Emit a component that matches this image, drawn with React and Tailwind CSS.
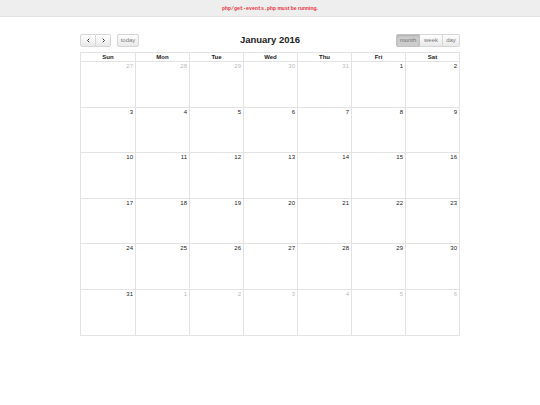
import React from "react";

const weeks = [
  [[27, 1], [28, 1], [29, 1], [30, 1], [31, 1], [1, 0], [2, 0]],
  [[3, 0], [4, 0], [5, 0], [6, 0], [7, 0], [8, 0], [9, 0]],
  [[10, 0], [11, 0], [12, 0], [13, 0], [14, 0], [15, 0], [16, 0]],
  [[17, 0], [18, 0], [19, 0], [20, 0], [21, 0], [22, 0], [23, 0]],
  [[24, 0], [25, 0], [26, 0], [27, 0], [28, 0], [29, 0], [30, 0]],
  [[31, 0], [1, 1], [2, 1], [3, 1], [4, 1], [5, 1], [6, 1]],
];
const days = ["Sun", "Mon", "Tue", "Wed", "Thu", "Fri", "Sat"];

function Btn({ children, className = "", active = false }) {
  return (
    <div
      className={
        "h-[13px] flex items-center justify-center border text-[6px] " +
        (active
          ? "bg-[#cdcdcd] border-[#c2c2c2] text-[#707070] shadow-[inset_0_1px_2px_rgba(0,0,0,0.15)] "
          : "border-[#d6d6d6] bg-gradient-to-b from-[#ffffff] to-[#e8e8e8] ") +
        className
      }
    >
      {children}
    </div>
  );
}

export default function App() {
  return (
    <div
      className="w-[540px] h-[405px] bg-white"
      style={{ fontFamily: '"Liberation Sans", Arial, sans-serif' }}
    >
      <div className="h-[17px] bg-[#eeeeee] border-b border-[#e2e2e2] flex items-center justify-center pt-[1px]">
        <p className="text-[5px] leading-[6px] text-[#e8333f] font-bold">
          <span style={{ fontFamily: '"Liberation Mono", monospace' }}>
            php/get-events.php
          </span>{" "}
          must be running.
        </p>
      </div>
      <div className="w-[380px] ml-[80px] mt-[17px]">
        <div className="h-[13px] flex items-center justify-between relative">
          <div className="flex items-center">
            <div className="flex">
              <Btn className="w-[16px] rounded-l-[2px]">
                <svg width="5" height="5" viewBox="0 0 10 10">
                  <path d="M6.5 1.5 L3 5 L6.5 8.5" fill="none" stroke="#333" strokeWidth="2" />
                </svg>
              </Btn>
              <Btn className="w-[15px] border-l-0 rounded-r-[2px]">
                <svg width="5" height="5" viewBox="0 0 10 10">
                  <path d="M3.5 1.5 L7 5 L3.5 8.5" fill="none" stroke="#333" strokeWidth="2" />
                </svg>
              </Btn>
            </div>
            <Btn className="w-[22px] ml-[6px] rounded-[2px] text-[#7a7a7a]">today</Btn>
          </div>
          <div className="absolute left-0 right-0 top-0 h-[13px] flex items-center justify-center pointer-events-none">
            <span className="text-[9.5px] font-bold text-[#222]">January 2016</span>
          </div>
          <div className="flex">
            <Btn active className="w-[24px] rounded-l-[2px]">
              month
            </Btn>
            <Btn className="w-[23px] border-l-0 text-[#777]">week</Btn>
            <Btn className="w-[17px] border-l-0 rounded-r-[2px] text-[#777]">day</Btn>
          </div>
        </div>
        <div className="mt-[5px] border border-[#e3e3e3]">
          <div className="grid grid-cols-7 h-[8px]">
            {days.map((d, i) => (
              <div
                key={d}
                className={
                  "flex items-center justify-center text-[6px] font-bold text-[#222] leading-none " +
                  (i > 0 ? "border-l border-[#e3e3e3]" : "")
                }
              >
                {d}
              </div>
            ))}
          </div>
          {weeks.map((w, r) => (
            <div key={r} className="grid grid-cols-7 h-[45.6px] border-t border-[#e3e3e3]">
              {w.map(([n, other], i) => (
                <div
                  key={i}
                  className={
                    "text-right pr-[2px] pt-[1px] text-[6px] leading-[7px] " +
                    (other ? "text-[#bbbbbb] " : "text-[#222] ") +
                    (i > 0 ? "border-l border-[#e3e3e3]" : "")
                  }
                >
                  {n}
                </div>
              ))}
            </div>
          ))}
        </div>
      </div>
    </div>
  );
}
